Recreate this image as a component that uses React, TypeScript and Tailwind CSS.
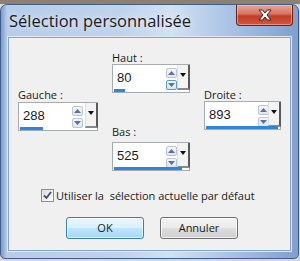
import React from "react";

interface SpinProps {
  value: string;
  bar: number;
  hot?: boolean;
}

function SpinBox({ value, bar, hot }: SpinProps) {
  return (
    <div className="relative h-[29px] w-full border border-[#a5acb5] bg-white">
      <div className="flex h-[25px] items-center pl-[4px] font-['Liberation_Sans',sans-serif] text-[13px] text-[#1a1a1a]">
        {value}
      </div>
      <div className="absolute left-[53px] top-[3px] flex flex-col gap-[2px]">
        <div className="flex h-[10px] w-[11px] items-center justify-center rounded-[2px] border border-[#b9c6d8] bg-[linear-gradient(#f4f7fb,#dfe6f1)]">
          <svg width="7" height="4" viewBox="0 0 7 4">
            <path d="M0 4 L3.5 0 L7 4 Z" fill="#5f6f9a" />
          </svg>
        </div>
        <div
          className={
            hot
              ? "flex h-[10px] w-[11px] items-center justify-center rounded-[2px] border border-[#5a9ad6] bg-[linear-gradient(#eef6fd,#d4e8f8)]"
              : "flex h-[10px] w-[11px] items-center justify-center rounded-[2px] border border-[#b9c6d8] bg-[linear-gradient(#f4f7fb,#dfe6f1)]"
          }
        >
          <svg width="7" height="4" viewBox="0 0 7 4">
            <path d="M0 0 L7 0 L3.5 4 Z" fill="#5f6f9a" />
          </svg>
        </div>
      </div>
      <div className="absolute right-[-1px] top-[0px] flex h-[25px] w-[13px] items-start justify-center border-r-2 border-b-2 border-l border-r-[#5a5a5a] border-b-[#8a8a8a] border-l-[#e0e0e0] bg-[#f3f3f3] pt-[8px]">
        <svg width="6" height="4" viewBox="0 0 6 4">
          <path d="M0 0 L6 0 L3 4 Z" fill="#111" />
        </svg>
      </div>
      <div className="absolute bottom-[0px] left-[1px] h-[3px] bg-[#2f86d8]" style={{ width: bar }} />
    </div>
  );
}

function Label({ children, gap }: { children: React.ReactNode; gap: string }) {
  return <div className={`${gap} h-[13px] text-[11px] leading-[13px] text-[#1a1a1a]`}>{children}</div>;
}

export default function App() {
  return (
    <div className="h-[261px] w-[300px] overflow-hidden bg-[linear-gradient(#8f7f70_0px,#8f7f70_4px,#d6d6d6_4px)] pt-[4px] font-['Open_Sans',sans-serif]">
      <div className="flex h-[255px] w-[299px] flex-col rounded-t-[7px] rounded-b-[5px] border border-[#3f5e8c] bg-[linear-gradient(90deg,#7d9cc8_0px,#b6cce9_6px,#bfd3ec_120px,#d2e1f3_170px,#a9c2e4_230px,#7f9ecc_299px)]">
        {/* title bar */}
        <div className="flex h-[32px] items-start justify-between">
          <div className="pl-[8px] pt-[6px] text-[16.5px] leading-[20px] text-[#1b1b1b] [text-shadow:0_0_6px_rgba(255,255,255,0.9)]">
            Sélection personnalisée
          </div>
          <div className="mr-[5px] flex h-[21px] w-[57px] items-center justify-center rounded-b-[4px] border border-t-0 border-[#6b2418] bg-[linear-gradient(#e9a597,#d8735f_45%,#c13b23_55%,#d2593e)] shadow-[inset_0_0_0_1px_rgba(255,200,190,0.5)]">
            <svg width="16" height="12" viewBox="0 0 16 12">
              <path
                d="M2 1 L5.5 1 L8 4 L10.5 1 L14 1 L10 6 L14 11 L10.5 11 L8 8 L5.5 11 L2 11 L6 6 Z"
                fill="#ffffff"
                stroke="#4a1c14"
                strokeWidth="1"
                strokeLinejoin="round"
              />
            </svg>
          </div>
        </div>
        {/* client area */}
        <div className="mx-[7px] h-[214px] border border-[#8aa2c4] bg-[#f0f0f0] px-[9px] pt-[13px] shadow-[0_0_0_1px_#dfe9f5]">
          <div className="grid grid-cols-[80px_78px_77px] gap-x-[14px]">
            <div className="pt-[37px]">
              <Label gap="mb-[1px]">Gauche :</Label>
              <SpinBox value="288" bar={23} />
            </div>
            <div>
              <Label gap="mb-[0px]">Haut :</Label>
              <SpinBox value="80" bar={11} hot />
              <div className="h-[32px]" />
              <Label gap="mb-[4px]">Bas :</Label>
              <SpinBox value="525" bar={68} />
            </div>
            <div className="pt-[37px]">
              <Label gap="mb-[0px]">Droite :</Label>
              <SpinBox value="893" bar={72} />
            </div>
          </div>
          <div className="mt-[17px] flex items-center pl-[23px]">
            <div className="flex h-[13px] w-[13px] items-center justify-center border border-[#8e8f8f] bg-[linear-gradient(135deg,#dcdcdc,#ffffff)]">
              <svg width="9" height="9" viewBox="0 0 9 9">
                <path d="M1 4.5 L3.5 7 L8 1" fill="none" stroke="#384d8c" strokeWidth="1.8" />
              </svg>
            </div>
            <span className="ml-[2px] whitespace-pre text-[11px] leading-[15px] text-[#1a1a1a]">Utiliser la  sélection actuelle par défaut</span>
          </div>
          <div className="mt-[14px] flex gap-[16px] pl-[48px]">
            <button className="h-[22px] w-[78px] rounded-[3px] border border-[#3c7fb1] bg-[linear-gradient(#eaf6fd,#d9f0fc_50%,#bee6fd_50%,#a7d9f5)] text-[11px] text-[#1a1a1a] shadow-[inset_0_0_0_1px_rgba(255,255,255,0.6)]">
              OK
            </button>
            <button className="h-[22px] w-[78px] rounded-[3px] border border-[#707070] bg-[linear-gradient(#f2f2f2,#ebebeb_50%,#dddddd_50%,#cfcfcf)] text-[11px] text-[#1a1a1a] shadow-[inset_0_0_0_1px_rgba(255,255,255,0.7)]">
              Annuler
            </button>
          </div>
        </div>
      </div>
    </div>
  );
}
